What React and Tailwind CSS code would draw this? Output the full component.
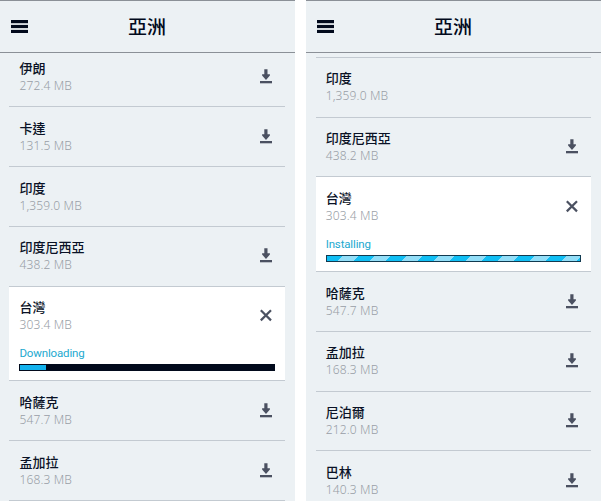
import clsx from 'clsx';

const leftItems = [
  { name: '伊朗', size: '272.4 MB', action: 'download' },
  { name: '卡達', size: '131.5 MB', action: 'download' },
  { name: '印度', size: '1,359.0 MB' },
  { name: '印度尼西亞', size: '438.2 MB', action: 'download' },
  { name: '台灣', size: '303.4 MB', action: 'cancel', status: 'Downloading', progress: 10 },
  { name: '哈薩克', size: '547.7 MB', action: 'download' },
  { name: '孟加拉', size: '168.3 MB', action: 'download' },
];

const rightItems = [
  { name: '印度', size: '1,359.0 MB' },
  { name: '印度尼西亞', size: '438.2 MB', action: 'download' },
  { name: '台灣', size: '303.4 MB', action: 'cancel', status: 'Installing' },
  { name: '哈薩克', size: '547.7 MB', action: 'download' },
  { name: '孟加拉', size: '168.3 MB', action: 'download' },
  { name: '尼泊爾', size: '212.0 MB', action: 'download' },
  { name: '巴林', size: '140.3 MB', action: 'download' },
];

function MenuIcon() {
  return (
    <svg width="17" height="13" viewBox="0 0 17 13" fill="#020a1c">
      <rect width="17" height="3.2" />
      <rect y="4.9" width="17" height="3.2" />
      <rect y="9.9" width="17" height="3.1" />
    </svg>
  );
}

function DownloadIcon() {
  return (
    <svg width="12" height="15" viewBox="0 0 12 15" fill="#4b5161">
      <path d="M4.3 0.3h3.2v5h2.4v1.3L6 11 2.1 6.6V5.3h2.2z" />
      <rect y="12" width="12" height="2.3" />
    </svg>
  );
}

function CancelIcon() {
  return (
    <svg width="12" height="15" viewBox="0 0 12 15" stroke="#4b5161" strokeWidth="2.2" fill="none">
      <path d="M0.8 2.2l10.2 10.2M11 2.2L0.8 12.4" />
    </svg>
  );
}

function ProgressBar({ progress }) {
  if (progress === undefined) {
    return (
      <div className="h-[7px] border border-[#123a50] bg-[repeating-linear-gradient(135deg,#10bff5_0_10.8px,#92def8_10.8px_22.1px,#10bff5_22.1px_22.6px)]" />
    );
  }
  return (
    <div className="h-[7px] border border-[#020a1c] bg-[#020a1c]">
      <div className="h-full bg-[#12b2ee]" style={{ width: `${progress}%` }} />
    </div>
  );
}

function Row({ item }) {
  return (
    <div
      className={clsx(
        'shrink-0 border-b border-[#c3cad1] px-[10px] pt-[12.5px]',
        item.status ? 'h-[94.8px] bg-white' : 'h-[59.75px]'
      )}
    >
      <div className="flex items-start justify-between">
        <div>
          <div className="text-[13px] font-medium leading-[17px] text-[#0a1226]">{item.name}</div>
          <div className="text-[12px] font-light leading-[17px] tracking-[0.15px] text-[#989ea6]">{item.size}</div>
        </div>
        <div className="mr-[3px] mt-[9px]">
          {item.action === 'download' && <DownloadIcon />}
          {item.action === 'cancel' && <CancelIcon />}
        </div>
      </div>
      {item.status && (
        <div className="mt-[13px]">
          <div className="mb-[3px] font-[Roboto,sans-serif] text-[11.5px] leading-[15px] tracking-[-0.15px] text-[#22a9cf]">
            {item.status}
          </div>
          <ProgressBar progress={item.progress} />
        </div>
      )}
    </div>
  );
}

function Phone({ listClass, children }) {
  return (
    <div className="flex h-full w-[295px] flex-col overflow-hidden bg-[#ecf1f4]">
      <div className="grid h-[53px] shrink-0 grid-cols-[1fr_auto_1fr] items-center border-y border-[#8b9097] px-[11px]">
        <MenuIcon />
        <h1 className="-ml-px text-[19px] font-medium leading-6 text-[#020a1c]">亞洲</h1>
      </div>
      <div className={clsx('flex min-h-0 flex-1 flex-col overflow-hidden pr-[10.4px]', listClass)}>{children}</div>
    </div>
  );
}

export default function App() {
  return (
    <div className="flex h-[501px] w-[601px] justify-between overflow-hidden bg-white font-['Noto_Sans','Noto_Sans_CJK_TC',sans-serif]">
      <Phone listClass="pl-[9.4px]">
        <div className="-mt-[5.5px]">
          {leftItems.map((item) => (
            <Row key={item.name} item={item} />
          ))}
        </div>
      </Phone>
      <Phone listClass="pl-[9.7px]">
        <div className="mt-[3.8px] border-t border-[#c3cad1]">
          {rightItems.map((item) => (
            <Row key={item.name} item={item} />
          ))}
        </div>
      </Phone>
    </div>
  );
}
